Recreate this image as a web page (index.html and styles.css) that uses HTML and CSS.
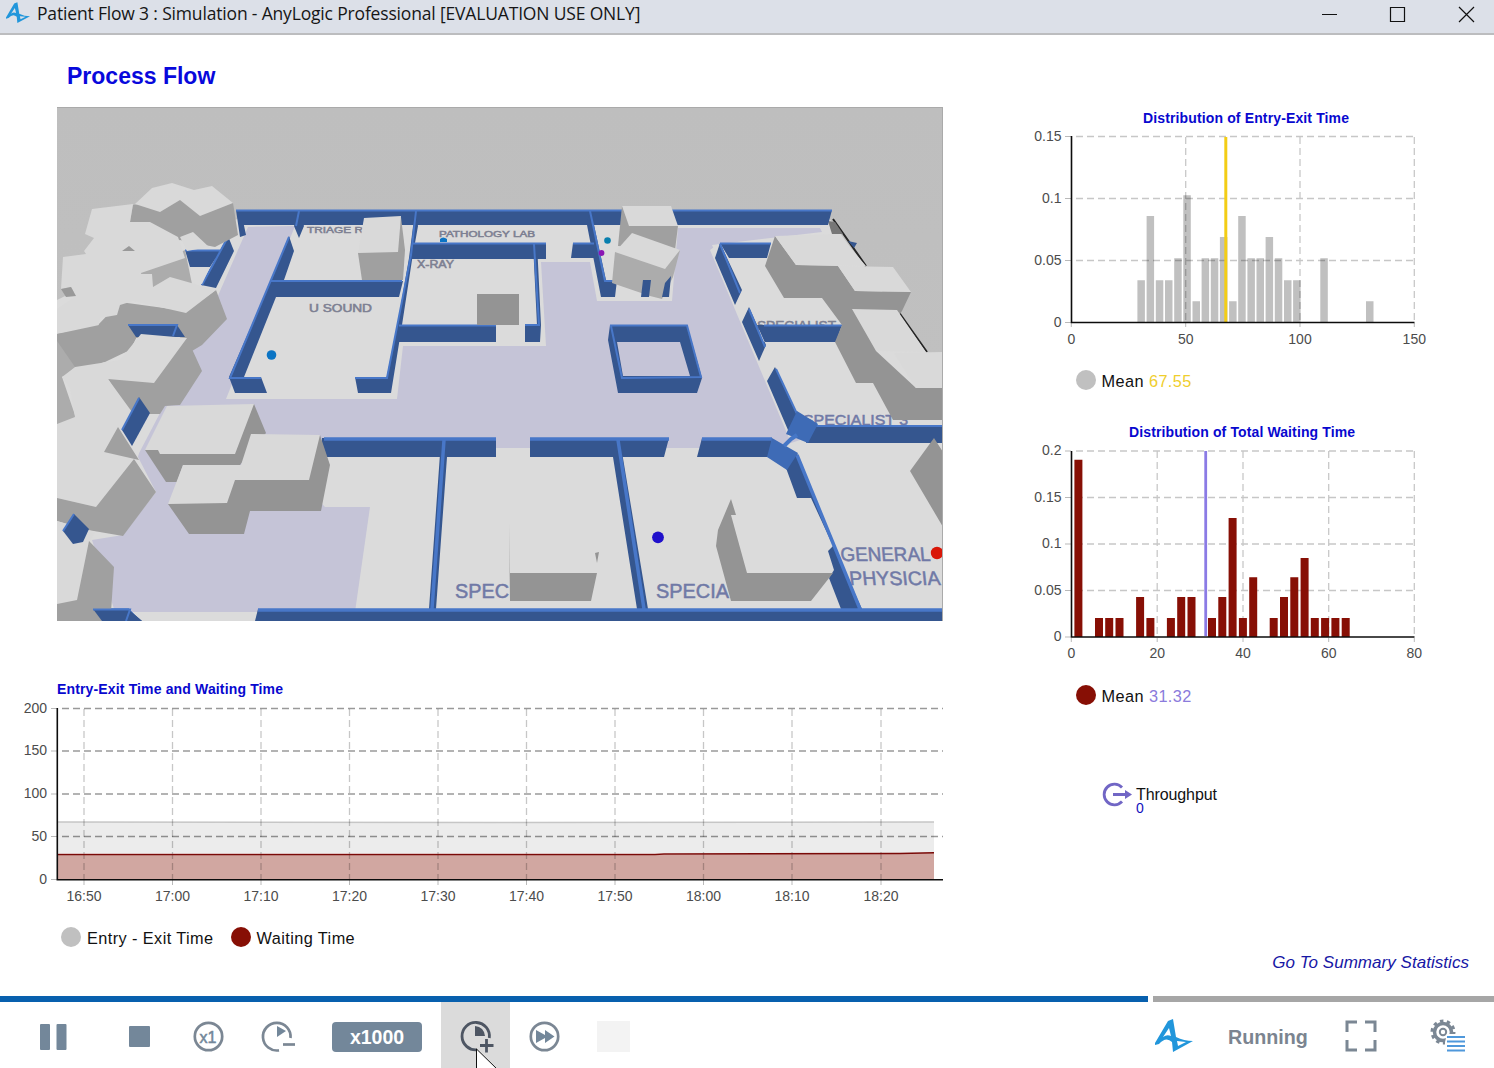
FILE: index.html
```html
<!DOCTYPE html>
<html lang="en">
<head>
<meta charset="utf-8">
<title>Patient Flow 3 : Simulation</title>
<link rel="stylesheet" href="styles.css">
</head>
<body>
<svg width="0" height="0" class="defs">
  <symbol id="logo" viewBox="0 0 38 34"><path fill="#2196db" d="M0 24 13 2 18 0 21 18Q29 22 38 22L18 33 17 23Q11 17 4 25L0 26ZM14 9 8 18Q12 15 16 17ZM22 22 23 27 31 23Z" fill-rule="evenodd"/></symbol>
</svg>
<header class="titlebar">
  <svg class="app-icon" width="24" height="22"><use href="#logo"/></svg>
  <span class="window-title">Patient Flow 3 : Simulation - AnyLogic Professional [EVALUATION USE ONLY]</span>
  <svg class="window-buttons" width="156" height="20" fill="none" stroke="#111" stroke-width="1.2"><path d="M3 9.500h15M71.500 2.500h14v14h-14zM140 2l15 15M155 2l-15 15"/></svg>
</header>

<main class="stage">
  <section class="left">
    <h1>Process Flow</h1>
    <svg class="scene" viewBox="57 107 886 514" width="886" height="514">
      <defs><linearGradient id="sky" x2="0" y2="1"><stop stop-color="#bebebe"/><stop offset="1" stop-color="#c2c2c2"/></linearGradient></defs>
      <path fill="url(#sky)" d="M57 107H943V621H57Z"/>
      <path fill="#dbdbdb" d="M180 240 240 218H829L943 375V621H57V300Z"/>
      <g class="corridor">
        <path d="M248 227 295 226 226 399H397L403 346H546L541 262H590L597 301H672L678 228H820L822 232 712 245 800 440 776 448H145L165 400 203 330Z"/>
        <path d="M148 412 166 404 250 430 325 507H370L355 612H115L92 540 123 535 156 492 138 457Z"/>
      </g>
      <path fill="#dbdbdb" d="M710 250 718 244 800 425 789 438ZM150 413H160L137 457 132 446ZM140 613H258V621H140Z"/>
      <path stroke="#252525" stroke-width="2" d="M833 219 866 266M898 311 927 352"/>
      <path fill="#777" d="M828 221 835 222 843 234 832 234Z"/>
      <g class="room-label far">
        <text x="307" y="233" textLength="56" lengthAdjust="spacingAndGlyphs">TRIAGE R</text>
        <text x="439" y="236.500" textLength="96" lengthAdjust="spacingAndGlyphs">PATHOLOGY LAB</text>
        <text class="xray" x="417" y="268" textLength="37" lengthAdjust="spacingAndGlyphs">X-RAY</text>
        <text class="usound" x="309" y="312" textLength="63" lengthAdjust="spacingAndGlyphs">U SOUND</text>
        <text class="specialist" x="757" y="330" textLength="79" lengthAdjust="spacingAndGlyphs">SPECIALIST</text>
        <text x="118" y="356">Re</text>
      </g>
      <g class="room-label">
        <text class="third" x="803" y="425" textLength="105" lengthAdjust="spacingAndGlyphs">SPECIALIST 3</text>
        <text x="455" y="598" textLength="54" lengthAdjust="spacingAndGlyphs">SPEC</text>
        <text x="656" y="598" textLength="73" lengthAdjust="spacingAndGlyphs">SPECIA</text>
        <text transform="translate(841 561) skewX(5)" textLength="90" lengthAdjust="spacingAndGlyphs">GENERAL</text>
        <text transform="translate(850 585) skewX(6)" textLength="91" lengthAdjust="spacingAndGlyphs">PHYSICIA</text>
      </g>
      <g class="wall">
        <path d="M236 210H832L828 225H240ZM236 210 242 216 246 235 240 237ZM299 211 304 226 299 238 294 226ZM185 250H221L210 267H190ZM228 236 234 251 216 288 201 285ZM289 236 294 251 284 280 271 281ZM271 281H403L399 297H276ZM271 281 276 297 244 377 229 377ZM229 377H261L267 393H235Z"/>
        <path d="M415 211 418 226 412 260 402 325 391 393 384 390 398 322 409 258ZM355 377H388L391 393H358ZM413 243H546V259H410ZM573 243H595L597 258H571ZM398 325H496V342H396ZM533 243 537 243 541 325 540 342H525V325H537ZM589 211 594 225 606 280H617L615 297H601L587 225Z"/>
        <path fill-rule="evenodd" d="M610 325H687L702 378 697 393H618L608 340ZM617 342 623 376H690L680 342Z"/>
        <path d="M720 243H771L767 258H729ZM720 243 715 258 735 305 742 290ZM749 307 742 322 759 361 766 345ZM757 325H842L836 342H763ZM775 367 767 381 788 430 805 432 797 415ZM812 425H943V443H806ZM848 241 857 243 854 248Z"/>
        <path d="M322 438H496V457H322ZM530 438H669L664 457H530ZM702 438H772L770 457H697ZM441 440 447 457 436 609H429ZM616 440H620L648 609H637L613 457ZM786 468 797 498H811L862 609H841L829 578 834 570 828 551 833 546 797 453ZM258 609H943V621H255ZM93 609H128L142 621H102Z"/>
      </g>
      <g class="wall-top">
        <path d="M236 210.500H832M299 211 296 226M185 250.500H220M228 237 202 285M289 237 230 378H261M271 281H402M416 211 411 255 387 378H355M413 243.500H546M573 243.500H594M399 325.500H496M534 244 539 325H525M590 211 605 281H617M610 325.500H687L701 377 622 378 611 326M720 243.500H771M720 244 740 293M749 309 765 347M764 325.500H842M776 369 798 416M812 426H943"/>
        <path class="thick" d="M324 439H496M530 439H669M702 439H772M444 440 432 609M618 440 644 609M797 455 860 609M258 610H943M93 610H128L138 621"/>
      </g>
      <path fill="#3e6bb6" d="M797 411 818 424 808 443 786 434ZM772 438 798 453 787 470 767 457Z"/><path stroke="#4677c7" stroke-width="4" d="M784 446 791 439 797 435" fill="none"/>

      <path class="side" d="M133 205 180 198 233 203 238 235 215 247 175 239 130 222Z"/>
      <path class="top" d="M135 204 152 188 172 183 194 190 212 186 233 203 200 216 180 200 160 212ZM180 237 193 232 209 247 187 251Z"/>
      <path class="side soft" d="M185 250 192 284 170 280 152 289 140 272Z"/>
      <path class="side" d="M57 332 98 325 120 302 186 311 216 290 227 319 202 345 177 360 100 380 57 375Z"/>
      <path fill="#dbdbdb" d="M192 267 210 267 202 284 193 282Z"/>
      <path class="top" d="M92 209 133 204 130 222 150 222 178 237 185 258 138 274 152 274 153 287 170 277 216 290 186 313 133 301 120 305 117 315 100 318 98 328 57 334V309L66 303 76 296 71 287 61 289 63 257 86 254 84 251 94 238 85 234Z"/>
      <path fill="#999" d="M61 289 71 287 76 296 66 297ZM122 251 129 246 135 251Z"/>
      <path fill="#dbdbdb" d="M105 352 136 338 180 337 170 372H100Z"/>
      <path class="wall-face" d="M128 325H177L185 337H136Z"/><path class="lit" d="M128 325H177L173 336"/>
      <path class="side" d="M118 321 136 338 130 350 105 362 57 373V334Z"/>
      <path class="side" d="M98 328 118 315 136 338 130 350 110 358Z"/>
      <path class="side soft" d="M57 341 75 367 62 377 76 418 57 425Z"/>
      <path class="side" d="M187 338 202 371 180 405 165 406 160 414H130L108 379Z"/>
      <path class="top" d="M62 377 75 367 120 360 141 334 187 338 154 383 108 379 132 412 124 430 104 452 134 459 96 507 57 498V424L75 417 70 388Z"/>
      <path class="side" d="M57 498 96 507 134 459 156 492 123 536 88 530 57 521ZM104 452 118 427 139 460Z"/>
      <path class="wall-face" d="M122 430 139 397 150 413 132 446Z"/><path class="lit" d="M122 430 139 398"/>
      <path class="top" d="M57 521 88 530 95 532 89 543 77 600 57 604Z"/>
      <path class="side" d="M89 541 114 567 111 612 101 621H57V604L77 600Z"/>
      <path class="wall-face" d="M63 531 74 514 89 529 83 542 73 544Z"/><path class="lit" d="M63 531 74 514"/>
      <path class="wall-face" d="M93 609H128L142 621H102Z"/><path class="lit" d="M93 609.500H130L126 621"/>

      <path class="side dark" d="M145 450 254 404 266 433 240 465H183L177 482H166Z"/>
      <path class="top" d="M167 406 254 404 235 454 160 454 158 450 145 450Z"/>
      <path class="side dark" d="M168 504 320 435 330 465 321 511H250L244 534H189Z"/>
      <path class="top" d="M251 434 320 435 309 480H235L227 503 168 504 183 465H241Z"/>
      <path class="side" d="M358 253 401 217 405 250 403 280H362Z"/>
      <path class="top" d="M364 218 401 216 398 252 358 253Z"/>
      <path class="side dark" d="M477 294H519V325H477Z"/>
      <path class="side" d="M622 206 678 226 675 250 618 246Z"/>
      <path class="top" d="M622 206H671L678 226H629Z"/>
      <path class="side soft" d="M615 252 680 250 673 277 662 299 650 296 612 283Z"/>
      <path class="top" d="M632 233 680 250 665 269 615 252Z"/>
      <path class="wall-face" d="M643 280H651L649 297H641ZM665 283 671 276 669 297H662Z"/>
      <path class="side dark" d="M775 236 796 265 838 266 855 291 911 292 902 311 876 351 916 388H943V420H893L873 383H856L835 342 842 325 822 298H784L765 266Z"/>
      <path class="top" d="M775 236 839 234 866 266 796 265ZM838 266 893 267 911 292 855 291ZM852 309 897 310 926 352 876 351ZM894 353 943 352V388H916Z"/>
      <path class="side dark" d="M510 573H597L591 601H510L509 523ZM595 553 599 552 597 563ZM731 499 736 515 731 515 747 573H833L811 601H731L716 546 718 530ZM934 438 943 452V527L910 471Z"/>
      <circle cx="271.500" cy="355" r="4.800" fill="#0b74c4"/><path fill="#0b74c4" d="M440 242V239Q443 236 447 239V242Z"/><circle cx="607.500" cy="240.500" r="3.300" fill="#087fae"/><circle cx="601.500" cy="253" r="2.900" fill="#8b16b4"/>
      <circle cx="658" cy="537.300" r="5.900" fill="#2010cb"/><circle cx="937" cy="553" r="6.200" fill="#d91708"/>
      <path stroke="#aaa" d="M57 107.500H943M942.500 107V621"/>
    </svg>
    <svg class="chart time-chart" viewBox="0 675 943 235" width="943" height="235">
      <text class="chart-title" x="57" y="694" textLength="226">Entry-Exit Time and Waiting Time</text>
      <path fill="#ececec" d="M58 822H934V853H58Z"/><path fill="#d1a7a1" d="M58 854.500 640 854.500 934 853V880H58Z"/>
      <path stroke="#c6c6c6" stroke-width="1.500" fill="none" d="M58 822 500 822.500 934 822"/>
      <g class="grid strong"><path d="M62 708.500H943M62 751H943M62 794H943M62 836.500H943"/></g>
      <g class="grid"><path d="M84 709V880M172.500 709V880M261 709V880M349.500 709V880M438 709V880M526.500 709V880M615 709V880M703.500 709V880M792 709V880M881 709V880"/></g>
      <path stroke="#7a0a08" stroke-width="1.500" fill="none" d="M58 854.500 655 854.500 664 854 762 853.800 900 853.500 934 852.800"/>
      <path class="tick" d="M51 708.500H57M51 751H57M51 794H57M51 836.500H57M51 879.500H57M84 880v5M172.500 880v5M261 880v5M349.500 880v5M438 880v5M526.500 880v5M615 880v5M703.500 880v5M792 880v5M881 880v5"/>
      <path class="axis" d="M57.300 708V879.800H943"/>
      <g class="labels end"><text x="47" y="713">200</text><text x="47" y="755">150</text><text x="47" y="798">100</text><text x="47" y="841">50</text><text x="47" y="884">0</text></g>
      <g class="labels mid"><text x="84" y="901">16:50</text><text x="172.500" y="901">17:00</text><text x="261" y="901">17:10</text><text x="349.500" y="901">17:20</text><text x="438" y="901">17:30</text><text x="526.500" y="901">17:40</text><text x="615" y="901">17:50</text><text x="703.500" y="901">18:00</text><text x="792" y="901">18:10</text><text x="881" y="901">18:20</text></g>
    </svg>
    <div class="legend time-legend"><i class="dot grey"></i><span class="l1">Entry - Exit Time</span><i class="dot red"></i><span>Waiting Time</span></div>
  </section>

  <section class="right">
    <svg class="chart" viewBox="1020 105 450 250" width="450" height="250">
      <text class="chart-title" x="1143" y="123" textLength="206">Distribution of Entry-Exit Time</text>
      <path fill="#c0c0c0" d="M1137.400 280.300h7.500V322h-7.500zM1146.600 216h7.500V322h-7.500zM1155.800 280.300h7.500V322h-7.500zM1165 280.300h7.500V322h-7.500zM1174.200 258.300h7.500V322h-7.500zM1183.300 195.300h7.500V322h-7.500zM1192.500 301.300h7.500V322h-7.500zM1201.600 258.300h7.500V322h-7.500zM1210.800 258.300h7.500V322h-7.500zM1219.900 237h7.500V322h-7.500zM1229.100 301.300h7.500V322h-7.500zM1238.200 216h7.500V322h-7.500zM1247.400 258.300h7.500V322h-7.500zM1256.500 258.300h7.500V322h-7.500zM1265.600 237h7.500V322h-7.500zM1274.800 258.300h7.500V322h-7.500zM1284 280.300h7.500V322h-7.500zM1293.100 280.300h7.500V322h-7.500zM1320.300 258.300h7.500V322h-7.500zM1366 301.300h7.500V322h-7.500z"/>
      <g class="grid"><path d="M1076 136.500H1414M1076 198.500H1414M1076 260.500H1414M1185.700 137V322M1300 137V322M1414.300 137V322"/></g>
      <path stroke="#f3cd16" stroke-width="3" d="M1225.800 137V322"/>
      <path class="tick" d="M1065 136.500h6M1065 198.500h6M1065 260.500h6M1065 322.500h6M1071.300 323v4M1185.700 323v4M1300 323v4M1414.300 323v4"/>
      <path class="axis" d="M1071.500 136V322.500H1414.500"/>
      <g class="labels end"><text x="1061.500" y="141">0.15</text><text x="1061.500" y="203">0.1</text><text x="1061.500" y="265">0.05</text><text x="1061.500" y="327">0</text></g>
      <g class="labels mid"><text x="1071.500" y="344">0</text><text x="1185.700" y="344">50</text><text x="1300" y="344">100</text><text x="1414.300" y="344">150</text></g>
    </svg>
    <div class="legend"><i class="dot grey"></i><span>Mean</span><b class="gold">67.55</b></div>
    <svg class="chart second" viewBox="1020 420 450 250" width="450" height="250">
      <text class="chart-title" x="1129" y="437" textLength="226">Distribution of Total Waiting Time</text>
      <g class="grid"><path d="M1076 451H1414M1076 497.500H1414M1076 544H1414M1076 590.500H1414M1157.200 451V637M1243 451V637M1328.700 451V637M1414.300 451V637"/></g>
      <path fill="#870f05" d="M1074.400 459.700h8V637h-8zM1095 618h8V637h-8zM1105.200 618h8V637h-8zM1115.500 618h8V637h-8zM1136.100 597h8V637h-8zM1146.400 618h8V637h-8zM1166.900 618h8V637h-8zM1177.200 597h8V637h-8zM1187.500 597h8V637h-8zM1208 618h8V637h-8zM1218.300 597h8V637h-8zM1228.600 518h8V637h-8zM1238.900 618h8V637h-8zM1249.200 577.300h8V637h-8zM1269.700 618h8V637h-8zM1280 597h8V637h-8zM1290.300 577.300h8V637h-8zM1300.600 558h8V637h-8zM1310.800 618h8V637h-8zM1321.100 618h8V637h-8zM1331.400 618h8V637h-8zM1341.700 618h8V637h-8z"/>
      <path stroke="#8b7be5" stroke-width="2.800" d="M1205.700 451V636"/>
      <path class="tick" d="M1065 451h6M1065 497.500h6M1065 544h6M1065 590.500h6M1065 637h6M1071.300 638v4M1157.200 638v4M1243 638v4M1328.700 638v4M1414.300 638v4"/>
      <path class="axis" d="M1071.500 451V637H1414.500"/>
      <g class="labels end"><text x="1061.500" y="455">0.2</text><text x="1061.500" y="502">0.15</text><text x="1061.500" y="548">0.1</text><text x="1061.500" y="595">0.05</text><text x="1061.500" y="641">0</text></g>
      <g class="labels mid"><text x="1071.500" y="658">0</text><text x="1157.200" y="658">20</text><text x="1243" y="658">40</text><text x="1328.700" y="658">60</text><text x="1414.300" y="658">80</text></g>
    </svg>
    <div class="legend"><i class="dot red"></i><span>Mean</span><b class="violet">31.32</b></div>
    <div class="throughput">
      <svg width="32" height="26" viewBox="0 0 32 26" fill="none" stroke="#7166c5" stroke-width="2.800"><path d="M21 5.500A10.300 10.300 0 1 0 21 19.500M12 12.500H25"/><path fill="#7166c5" stroke="none" d="M24 8 31 12.500 24 17Z"/></svg>
      <div><span>Throughput</span><small>0</small></div>
    </div>
    <a class="summary">Go To Summary Statistics</a>
  </section>
</main>

<div class="progress"><span class="done"></span><span class="rest"></span></div>
<footer class="toolbar">
  <svg class="controls" width="320" height="66" viewBox="0 0 320 66"><g fill="#73879a"><rect x="40" y="22" width="10" height="26" rx="1"/><rect x="56.500" y="22" width="10" height="26" rx="1"/><rect x="129" y="24" width="21" height="21" rx="1"/></g>
    <g fill="none" stroke="#7b8794" stroke-width="2.700"><circle cx="208.500" cy="34.500" r="13.700"/><path d="M279 48.300A13.800 13.800 0 1 1 290.500 36"/><path d="M283 42.500H295"/></g><path fill="#73879a" d="M277 24 286 29 277 35Z"/><text class="normal-speed" x="208" y="41" textLength="17" lengthAdjust="spacingAndGlyphs">x1</text></svg>
  <span class="speed">x1000</span>
  <span class="faster"><svg width="69" height="66" viewBox="0 0 69 66"><g fill="none" stroke="#4e5663" stroke-width="2.800"><path d="M36 47.800A13.700 13.700 0 1 1 48.300 36M45.500 37V50.500M39 43.500H52.500"/></g><path fill="#4e5663" d="M34 24Q43 25 44 34H34Z"/><path fill="#fff" stroke="#111" d="M35.500 47V68H57Z"/></svg></span>
  <svg class="fast" width="70" height="66" viewBox="0 0 70 66"><circle cx="34.500" cy="34.500" r="13.700" fill="none" stroke="#7b8794" stroke-width="2.700"/><path fill="#73879a" d="M26 28 35 33V28L44.500 34.500 35 41V36L26 41Z"/></svg>
  <span class="blank"></span>
  <svg class="brand" width="38" height="34"><use href="#logo"/></svg>
  <span class="status">Running</span>
  <svg class="full" width="32" height="32" fill="none" stroke="#7b8794" stroke-width="3"><path d="M2 12V2H12M20 2H30V12M30 20V30H20M12 30H2V20"/></svg>
  <svg class="gear" width="36" height="34" viewBox="0 0 36 34"><g fill="none" stroke="#7b8794"><circle cx="13" cy="13" r="8.500" stroke-width="3.500"/><circle cx="13" cy="13" r="11" stroke-width="3" stroke-dasharray="3.460 3.460"/><circle cx="13" cy="13" r="3.200" stroke-width="2"/></g><path fill="#fff" d="M17 15H36V34H15V23Z"/><path stroke="#4f98db" stroke-width="1.800" d="M17 18H35M17 22.500H35M17 27H35M17 31.500H35"/></svg>
</footer>
</body>
</html>
```
FILE: styles.css
```css
* { box-sizing: border-box; }
body { margin: 0; width: 1494px; height: 1068px; overflow: hidden; background: #fff; font-family: "Liberation Sans", Arial, sans-serif; display: flex; flex-direction: column; }
svg { display: block; flex: none; }
.defs { display: none; }
.titlebar { height: 35px; flex: none; background: #dce0e8; border-bottom: 2px solid #bcbdbf; display: flex; align-items: flex-start; padding: 2px 19px 0 6px; }
.window-title { font: 17.500px/24px "Open Sans", "Noto Sans", sans-serif; letter-spacing: -.17px; color: #161616; margin: -1px 0 0 7px; white-space: nowrap; }
.window-buttons { margin: 3px 0 0 auto; }
.stage { height: 961px; flex: none; display: flex; }
.left { width: 943px; }
h1 { margin: 0; height: 72px; padding: 27px 0 0 67px; font-size: 23px; line-height: 28px; color: #0808dc; }
.scene { margin-left: 57px; }
.room-label { fill: #7079a6; font-size: 19.500px; }
.room-label text { stroke: #7079a6; stroke-width: .5px; }
.room-label .third { font-size: 14px; }
.far { font-size: 8.500px; }
.far text { fill: #7d8092; stroke: #7d8092; }
.xray, .usound { font-size: 10px; }
.specialist { font-size: 12px; }
.corridor { fill: #c5c4d7; }
.wall, .wall-face { fill: #35568f; }
.wall-top, .lit { fill: none; stroke: #4877c8; stroke-width: 2; }
.thick { stroke-width: 3.500; }
.top { fill: #d9d9d9; }
.side { fill: #a0a0a0; }
.soft { fill: #acacac; }
.dark { fill: #949494; }
.time-chart { margin-top: 54px; }
.chart-title { font-size: 14px; font-weight: bold; fill: #0808cf; }
.grid { fill: none; stroke: #000; stroke-opacity: .22; stroke-width: 1.300; stroke-dasharray: 7 4; }
.strong { stroke-opacity: .4; }
.axis { fill: none; stroke: #0c0c0c; stroke-width: 1.600; }
.tick { stroke: #b9b9b9; }
.labels { font-size: 14px; fill: #4c4c4c; }
.end { text-anchor: end; }
.mid { text-anchor: middle; }
.legend { display: flex; align-items: center; height: 26px; font-size: 16.300px; letter-spacing: .42px; color: #111; }
.dot { width: 20px; height: 20px; border-radius: 50%; margin: -2px 6px 0 0; }
.grey { background: #c0c0c0; }
.red { background: #870f05; }
.time-legend { margin: 15px 0 0 61px; }
.l1 { margin-right: 17px; }
.right { width: 551px; padding: 70px 0 0 77px; display: flex; flex-direction: column; }
.right .legend { margin: 13px 0 0 55.500px; }
.legend b { font-weight: 400; margin-left: 5px; }
.gold { color: #efce2d; }
.violet { color: #8b7bdc; }
.second { margin-top: 26px; }
.throughput { display: flex; margin: 73px 0 0 81px; font-size: 16px; color: #111; }
.throughput div { display: flex; flex-direction: column; margin: 4px 0 0 3px; line-height: 18px; letter-spacing: -.1px; }
.throughput small { font-size: 14px; line-height: 10px; margin-top: -1px; color: #1111be; }
.summary { align-self: flex-end; margin: auto 25px 23px 0; font: italic 17px/20px "Liberation Sans", Arial, sans-serif; color: #1717a5; letter-spacing: .04px; }
.progress { height: 6px; flex: none; display: flex; gap: 5px; }
.done { width: 1148px; background: #0860ae; }
.rest { flex: 1; background: #a6a6a6; }
.toolbar { height: 66px; flex: none; display: flex; align-items: flex-start; }
.normal-speed { font-size: 17px; text-anchor: middle; fill: #73879a; stroke: #73879a; stroke-width: .5px; }
.speed { width: 90px; height: 30px; margin: 20px 0 0 12px; border-radius: 4px; background: #73879a; color: #fff; font-size: 19.500px; line-height: 30px; font-weight: bold; text-align: center; }
.faster { margin-left: 19px; background: #dbdbdb; }
.blank { width: 33px; height: 31px; margin: 19px 0 0 17px; background: #f3f3f3; }
.brand { margin: 17px 0 0 525px; }
.status { width: 80px; margin: 23px 0 0 35px; font-size: 19.700px; line-height: 24px; font-weight: bold; color: #7b8490; }
.full { margin: 18px 0 0 37px; }
.gear { margin: 17px 0 0 53px; }
```
